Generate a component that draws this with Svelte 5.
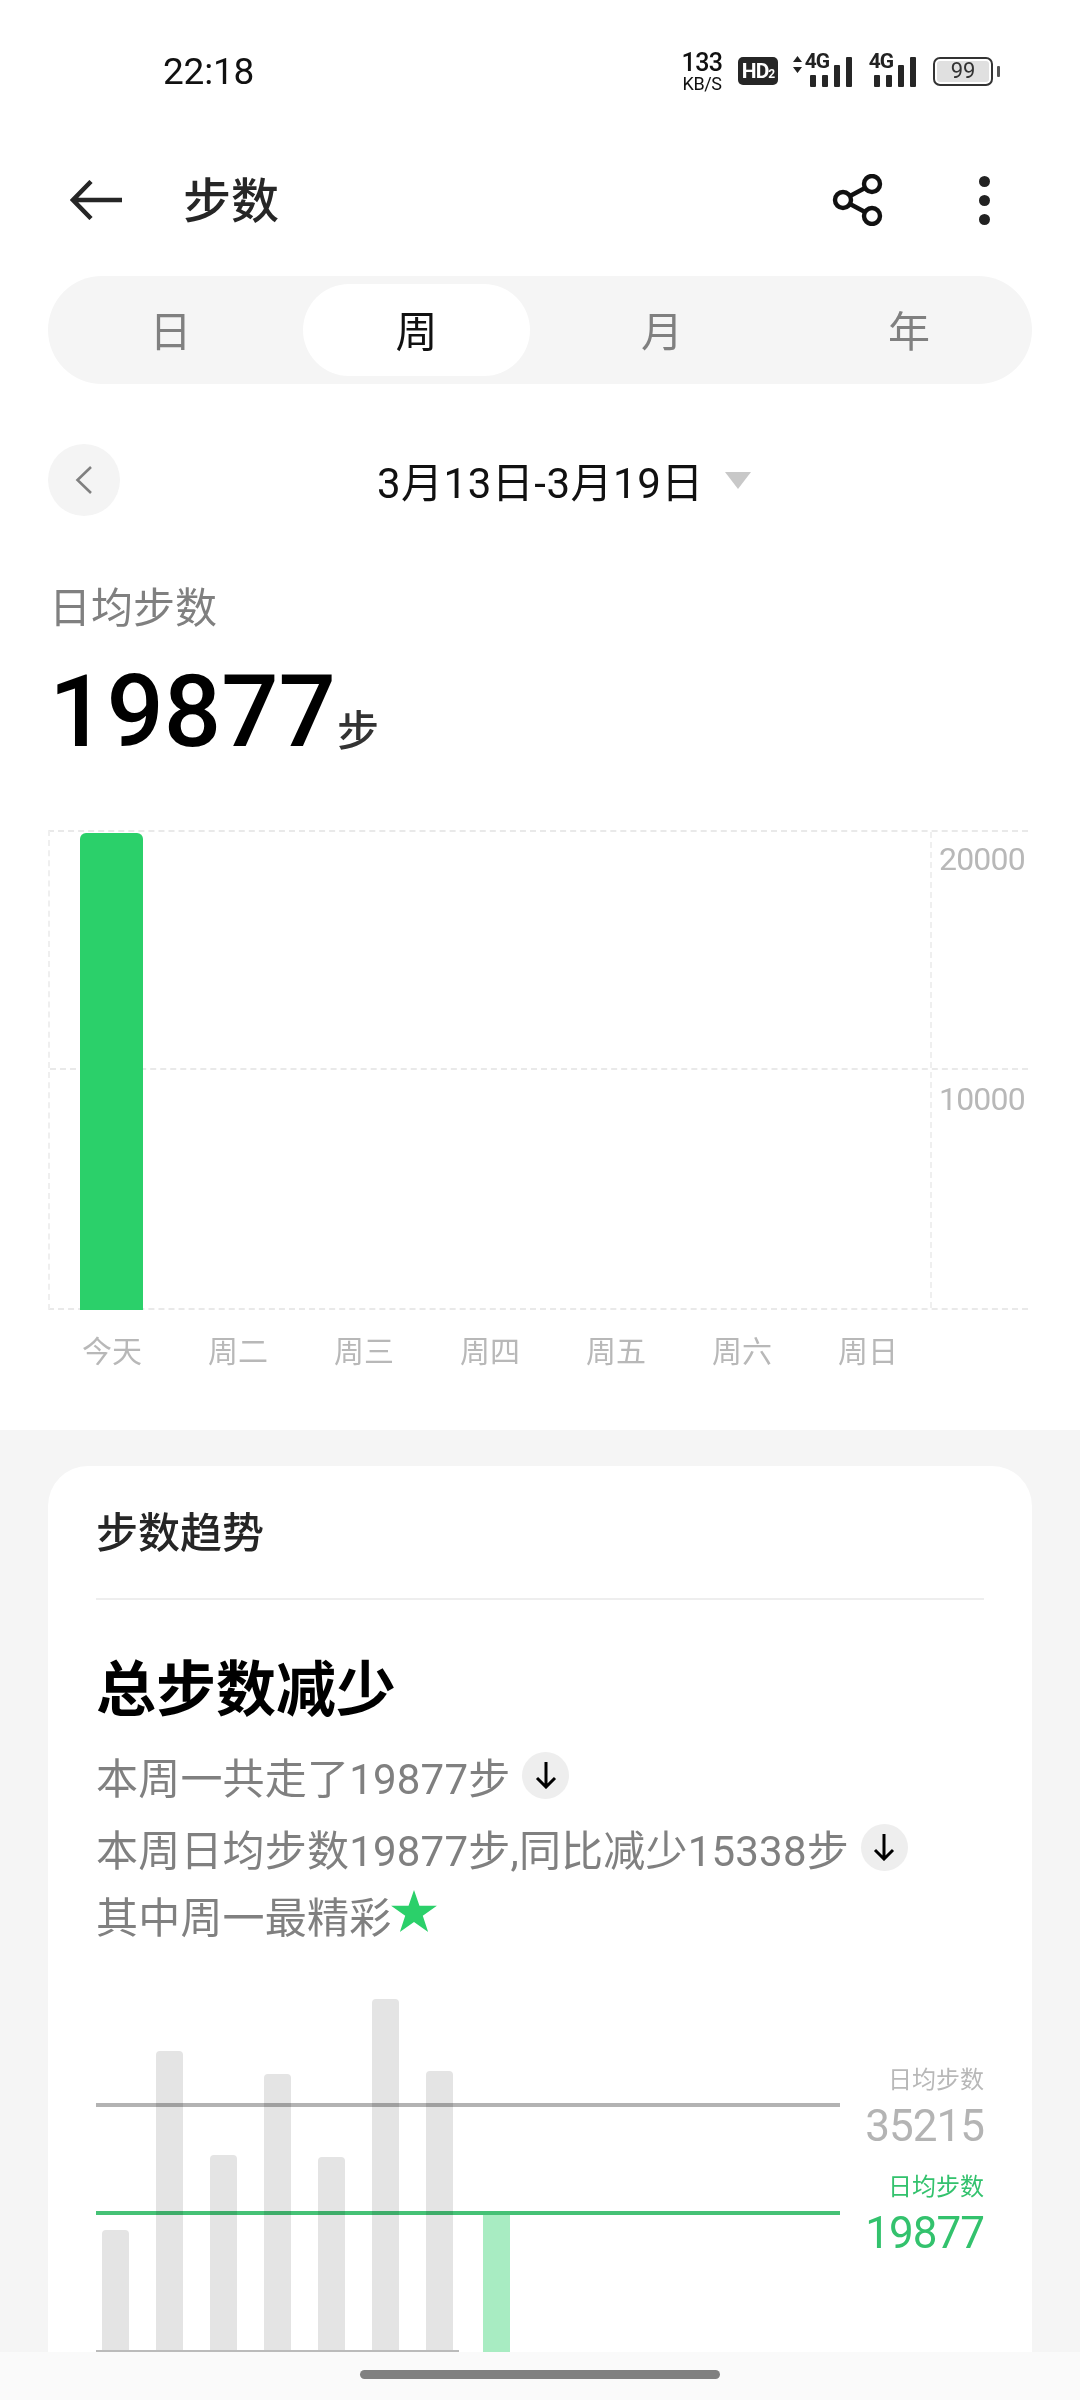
<script lang="ts">
	const tabs = ['日', '周', '月', '年'];
	const days = ['今天', '周二', '周三', '周四', '周五', '周六', '周日'];
	const lastWeek = [122, 301, 197, 278, 195, 353, 281];
</script>

<div class="page">
	<section class="top">
		<div class="status">
			<span class="time">22:18</span>
			<div class="status-icons">
				<div class="speed"><span class="rate">133</span><span class="unit">KB/S</span></div>
				<div class="hd">HD<small>2</small></div>
				<div class="sim first">
					<svg width="11" height="20" viewBox="0 0 11 20"><path d="M5.5 1 10 7H1zM1 12h9l-4.5 6z" fill="#222" /></svg>
					<span class="g">4G</span>
					<i class="b1"></i><i class="b2"></i><i class="b3"></i><i class="b4"></i>
				</div>
				<div class="sim">
					<span class="g">4G</span>
					<i class="b1"></i><i class="b2"></i><i class="b3"></i><i class="b4"></i>
				</div>
				<div class="battery"><div class="cell">99</div><i class="nub"></i></div>
			</div>
		</div>

		<header class="toolbar">
			<svg class="back" width="52" height="40" viewBox="0 0 52 40">
				<path d="M21 1.5 3 20l18 18.5M3 20h49" fill="none" stroke="#262626" stroke-width="4.5" />
			</svg>
			<h1>步数</h1>
			<svg class="share" width="52" height="52" viewBox="0 0 52 52" fill="none" stroke="#111" stroke-width="4.4">
				<circle cx="11" cy="26" r="8" />
				<circle cx="40" cy="10" r="8" />
				<circle cx="40" cy="42" r="8" />
				<path d="m18 22 15-8M18 30l15 8" />
			</svg>
			<div class="dots"><i></i><i></i><i></i></div>
		</header>

		<nav class="segment">
			{#each tabs as tab, i}
				<div class="tab" class:active={i === 1}>{tab}</div>
			{/each}
		</nav>

		<div class="date-row">
			<button class="prev" aria-label="上一周">
				<svg width="18" height="28" viewBox="0 0 18 28"><path d="M16 1 2.500 14 16 27" fill="none" stroke="#808080" stroke-width="2.600" /></svg>
			</button>
			<div class="range">3月13日-3月19日</div>
			<svg class="caret" width="26" height="18" viewBox="0 0 26 18"><path d="M0 1h26L13 18z" fill="#c8c8c8" /></svg>
		</div>

		<div class="avg-label">日均步数</div>
		<div class="avg"><span class="num">19877</span><span class="unit-step">步</span></div>

		<div class="week-chart">
			<i class="hline mid"></i>
			<i class="vline"></i>
			<div class="today-bar"></div>
			<span class="tick t1">20000</span>
			<span class="tick t2">10000</span>
		</div>
		<div class="days">
			{#each days as day}
				<span>{day}</span>
			{/each}
		</div>
	</section>

	<section class="card">
		<h2>步数趋势</h2>
		<div class="divider"></div>
		<h3>总步数减少</h3>
		<div class="line">本周一共走了19877步<span class="down">
			<svg width="22" height="28" viewBox="0 0 22 28"><path d="M11 1v25M2 17l9 9 9-9" fill="none" stroke="#000" stroke-width="3" /></svg>
		</span></div>
		<div class="line">本周日均步数19877步,同比减少15338步<span class="down">
			<svg width="22" height="28" viewBox="0 0 22 28"><path d="M11 1v25M2 17l9 9 9-9" fill="none" stroke="#000" stroke-width="3" /></svg>
		</span></div>
		<div class="line last">其中周一最精彩<svg class="star" width="46" height="42" viewBox="0 0 48 44"><path d="m24 0 5.700 16.500H48L33.200 27l5.600 17L24 33.500 9.200 44l5.600-17L0 16.500h18.300z" fill="#2bd06a" /></svg></div>

		<div class="compare">
			<div class="plot">
				{#each lastWeek as h}
					<div class="bar" style:height="{h}px"></div>
				{/each}
				<div class="bar now" style:height="137px"></div>
				<i class="ref gray"></i>
				<i class="ref green"></i>
			</div>
			<div class="legend">
				<span class="lg-label">日均步数</span>
				<span class="lg-num">35215</span>
				<span class="lg-label lg-green second">日均步数</span>
				<span class="lg-num lg-green">19877</span>
			</div>
		</div>
	</section>

	<div class="gesture"><i></i></div>
</div>

<style>
	:global(body) {
		margin: 0;
		background: #f5f5f5;
	}

	.page {
		position: relative;
		width: 1080px;
		height: 2400px;
		overflow: hidden;
		background: #f5f5f5;
		font-family: Roboto, 'Noto Sans CJK SC', sans-serif;
		color: #222;
	}

	.top {
		height: 1430px;
		background: #fff;
		overflow: hidden;
	}

	/* status bar */
	.status {
		height: 142px;
		display: flex;
		align-items: center;
		padding: 0 80px 0 163px;
		justify-content: space-between;
	}

	.time {
		font-size: 37px;
		color: #111;
		letter-spacing: -0.2px;
	}

	.status-icons {
		display: flex;
		align-items: center;
		height: 42px;
	}

	.speed {
		display: flex;
		flex-direction: column;
		align-items: center;
		width: 40px;
		color: #111;
	}

	.speed .rate {
		font-size: 25px;
		font-weight: 500;
		letter-spacing: -0.5px;
		line-height: 25px;
	}

	.speed .unit {
		font-size: 18px;
		letter-spacing: -0.4px;
		line-height: 17px;
	}

	.hd {
		margin-left: 16px;
		width: 40px;
		height: 28px;
		background: #262626;
		border-radius: 5px;
		color: #fff;
		font-size: 21px;
		font-weight: 700;
		line-height: 28px;
		text-align: center;
		letter-spacing: -1px;
	}

	.hd small {
		font-size: 12px;
	}

	.sim {
		position: relative;
		width: 46px;
		height: 32px;
		margin-left: 18px;
	}

	.sim.first {
		width: 60px;
		margin-left: 14px;
	}

	.sim svg {
		position: absolute;
		left: 0;
		top: 0;
	}

	.sim .g {
		position: absolute;
		right: 23px;
		top: -4px;
		font-size: 21px;
		font-weight: 700;
		line-height: 20px;
		letter-spacing: -1px;
		color: #222;
	}

	.sim i {
		position: absolute;
		bottom: 0;
		width: 6px;
		background: #262626;
		border-radius: 1px;
	}

	.sim .b1 { right: 36px; height: 12px; }
	.sim .b2 { right: 24px; height: 12px; }
	.sim .b3 { right: 12px; height: 22px; }
	.sim .b4 { right: 0; height: 30px; }

	.battery {
		position: relative;
		margin-left: 17px;
		width: 60px;
		height: 29px;
		box-sizing: border-box;
		border: 2.5px solid #333;
		border-radius: 7px;
		padding: 2px;
		margin-right: 7px;
	}

	.cell {
		height: 100%;
		background: #e0e0e0;
		border-radius: 3px;
		text-align: center;
		font-size: 22px;
		line-height: 20px;
		color: #333;
	}

	.nub {
		position: absolute;
		right: -9px;
		top: 7px;
		width: 3px;
		height: 11px;
		background: #555;
		border-radius: 1px;
	}

	/* toolbar */
	.toolbar {
		height: 116px;
		display: flex;
		align-items: center;
		padding-left: 70px;
	}

	.toolbar h1 {
		margin: 4px 0 0 61px;
		font-size: 48px;
		font-weight: 500;
		color: #262626;
		line-height: 60px;
	}

	.share {
		margin-left: auto;
		margin-right: 95px;
	}

	.dots {
		display: flex;
		flex-direction: column;
		gap: 8px;
		margin-right: 90px;
	}

	.dots i {
		width: 11px;
		height: 11px;
		border-radius: 50%;
		background: #222;
	}

	/* segmented control */
	.segment {
		margin: 18px 48px 0;
		height: 108px;
		box-sizing: border-box;
		padding: 8px 0;
		background: #f5f5f5;
		border-radius: 54px;
		display: grid;
		grid-template-columns: 245px 245px 248px 246px;
	}

	.tab {
		display: flex;
		align-items: center;
		justify-content: center;
		font-size: 42px;
		color: #808080;
		border-radius: 46px;
		padding-bottom: 4px;
	}

	.tab.active {
		color: #111;
		background: #fff;
		width: 227px;
		justify-self: start;
		margin-left: 10px;
	}

	/* date switcher */
	.date-row {
		margin: 60px 48px 0;
		height: 72px;
		display: flex;
		align-items: center;
	}

	.prev {
		width: 72px;
		height: 72px;
		padding: 0;
		border: none;
		border-radius: 50%;
		background: #f4f4f4;
		display: flex;
		align-items: center;
		justify-content: center;
	}

	.range {
		margin: 0 0 2px 257px;
		width: 320px;
		font-size: 42px;
		letter-spacing: 0.5px;
		color: #111;
		white-space: nowrap;
	}

	.caret {
		margin-left: 28px;
	}

	.avg-label {
		margin: 72px 0 0 49px;
		font-size: 42px;
		line-height: 42px;
		color: #808080;
	}

	.avg {
		margin: 32px 0 0 49px;
		height: 100px;
		display: flex;
		align-items: baseline;
	}

	.num {
		font-size: 101px;
		line-height: 100px;
		font-weight: 500;
		color: #000;
	}

	.unit-step {
		font-size: 42px;
		font-weight: 500;
		margin-left: 1px;
		color: #333;
	}

	/* week chart */
	.week-chart {
		position: relative;
		margin: 68px 52px 0 48px;
		height: 480px;
		box-sizing: border-box;
		border-top: 2px dashed #e9e9e9;
		border-bottom: 2px dashed #e9e9e9;
		border-left: 2px dashed #efefef;
	}

	.hline {
		position: absolute;
		left: 0;
		right: 0;
		top: 236px;
		border-top: 2px dashed #e9e9e9;
	}

	.vline {
		position: absolute;
		left: 880px;
		top: 0;
		bottom: 0;
		border-left: 2px dashed #efefef;
	}

	.today-bar {
		position: absolute;
		left: 30px;
		bottom: -2px;
		width: 63px;
		height: 477px;
		background: #2bd06a;
		border-radius: 6px 6px 0 0;
	}

	.tick {
		position: absolute;
		left: 889px;
		font-size: 32px;
		letter-spacing: -0.8px;
		line-height: 40px;
		color: #b8b8b8;
	}

	.t1 { top: 7px; }
	.t2 { top: 247px; }

	.days {
		margin: 22px 0 0 82px;
		display: flex;
		gap: 66px;
		font-size: 30px;
		line-height: 40px;
		color: #b8b8b8;
	}

	/* card */
	.card {
		margin: 36px 48px 0;
		height: 1000px;
		box-sizing: border-box;
		padding: 48px 48px 0;
		background: #fff;
		border-radius: 40px;
	}

	.card h2 {
		margin: 0;
		font-size: 42px;
		line-height: 40px;
		font-weight: 500;
		color: #262626;
	}

	.divider {
		margin-top: 44px;
		height: 2px;
		background: #eee;
	}

	.card h3 {
		margin: 56px 0 16px;
		font-size: 60px;
		line-height: 70px;
		font-weight: 700;
		color: #000;
	}

	.line {
		height: 66px;
		margin-bottom: 6px;
		display: flex;
		align-items: center;
		font-size: 42px;
		letter-spacing: 0.2px;
		color: #808080;
		white-space: nowrap;
	}

	.line.last {
		margin-top: -5px;
		margin-bottom: 0;
	}

	.down {
		margin-left: 12px;
		width: 47px;
		height: 47px;
		border-radius: 50%;
		background: #eee;
		display: flex;
		align-items: center;
		justify-content: center;
	}

	.star {
		margin: -6px 0 0 0;
	}

	.compare {
		margin-top: 52px;
		height: 353px;
		display: flex;
	}

	.plot {
		position: relative;
		width: 744px;
		height: 353px;
		box-sizing: border-box;
		padding-left: 6px;
		display: flex;
		align-items: flex-end;
		gap: 27px;
	}

	.plot::after {
		content: '';
		position: absolute;
		left: 0;
		bottom: 0;
		width: 363px;
		height: 2px;
		background: #bbb;
	}

	.bar {
		width: 27px;
		background: #e4e4e4;
		border-radius: 4px 4px 0 0;
	}

	.bar.now {
		margin-left: 3px;
		background: #a8ecc2;
		border-radius: 0;
	}

	.ref {
		position: absolute;
		left: 0;
		right: 0;
		height: 4px;
		mix-blend-mode: multiply;
	}

	.ref.gray {
		top: 104px;
		background: #b3b3b3;
	}

	.ref.green {
		top: 212px;
		background: #45c276;
	}

	.legend {
		flex: 1;
		display: flex;
		flex-direction: column;
		align-items: flex-end;
		padding-top: 63px;
	}

	.lg-label {
		font-size: 24px;
		line-height: 36px;
		color: #b8b8b8;
	}

	.lg-num {
		margin-top: 2px;
		font-size: 44px;
		letter-spacing: -1px;
		line-height: 52px;
		color: #b4b4b4;
	}

	.lg-green {
		color: #33c26d;
	}

	.second {
		margin-top: 17px;
	}

	/* gesture bar */
	.gesture {
		position: absolute;
		left: 0;
		right: 0;
		bottom: 0;
		height: 48px;
		background: #fafafa;
	}

	.gesture i {
		position: absolute;
		left: 360px;
		top: 18px;
		width: 360px;
		height: 9px;
		border-radius: 5px;
		background: #808080;
	}
</style>
